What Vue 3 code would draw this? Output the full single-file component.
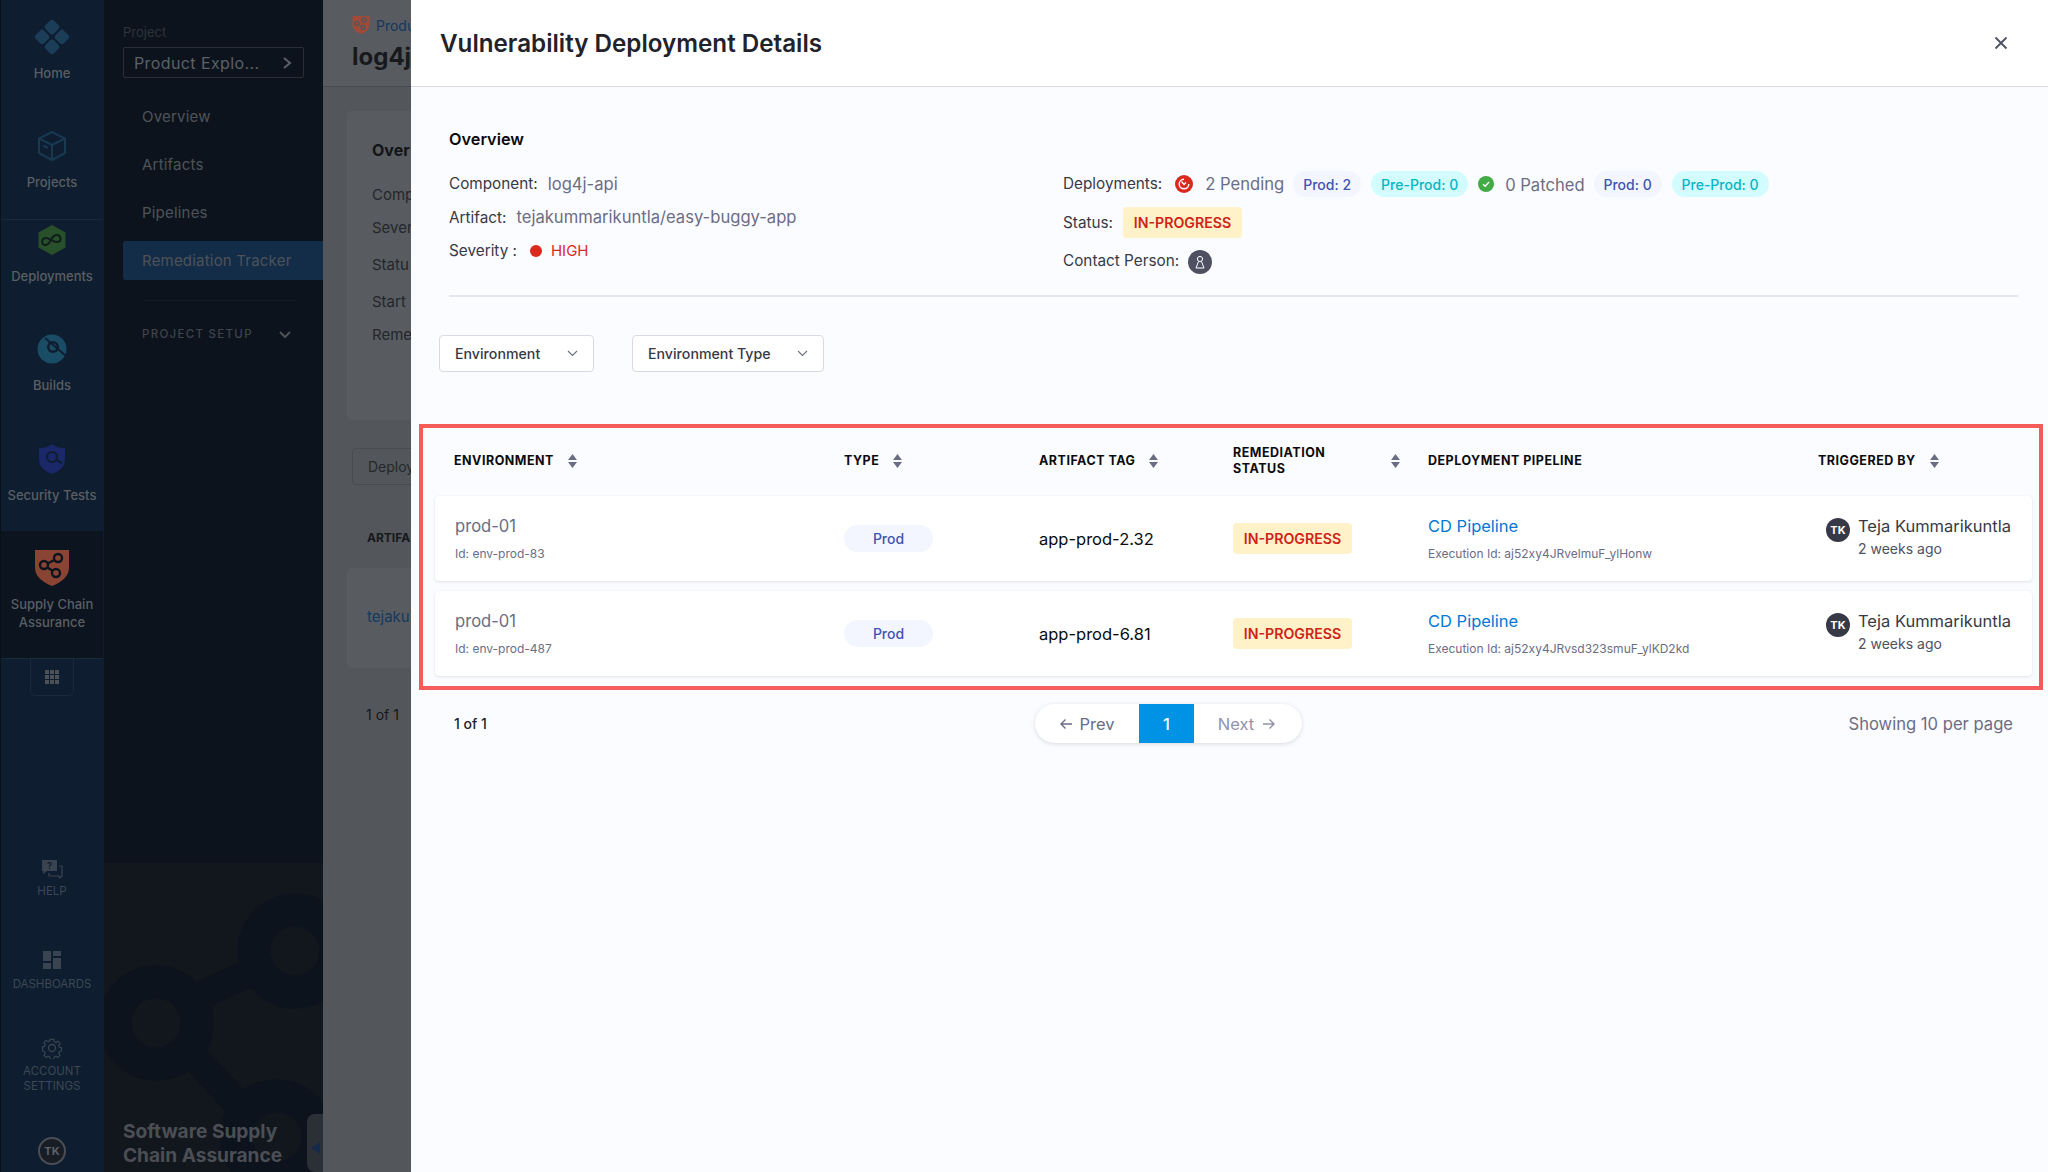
<script setup>
const railItems = [
  { label: ["Home"], icon: "home", cls: "r-home" },
  { label: ["Projects"], icon: "projects", cls: "r-projects" },
  { label: ["Deployments"], icon: "deploy", cls: "r-deploy" },
  { label: ["Builds"], icon: "builds", cls: "r-builds" },
  { label: ["Security Tests"], icon: "security", cls: "r-security" },
  { label: ["Supply Chain", "Assurance"], icon: "scs", cls: "r-scs" }
];

const navLinks = ["Overview", "Artifacts", "Pipelines", "Remediation Tracker"];

const columns = [
  { title: "ENVIRONMENT", sort: true },
  { title: "TYPE", sort: true },
  { title: "ARTIFACT TAG", sort: true },
  { title: "REMEDIATION STATUS", sort: true, wide: true },
  { title: "DEPLOYMENT PIPELINE", sort: false },
  { title: "TRIGGERED BY", sort: true }
];

const rows = [
  { env: "prod-01", id: "env-prod-83", tag: "app-prod-2.32", exec: "aj52xy4JRvelmuF_ylHonw" },
  { env: "prod-01", id: "env-prod-487", tag: "app-prod-6.81", exec: "aj52xy4JRvsd323smuF_ylKD2kd" }
];
</script>

<template>
  <div class="page">
    <aside class="rail">
      <div v-for="item in railItems" :key="item.icon" class="rail-item" :class="item.cls">
        <div class="rail-icon">
          <svg v-if="item.icon == 'home'" width="36" height="36" viewBox="0 0 36 36">
            <g fill="#1b3d58" transform="rotate(45 18 18)">
              <rect x="5" y="5" width="12" height="12" rx="3" />
              <rect x="19" y="5" width="12" height="12" rx="3" />
              <rect x="5" y="19" width="12" height="12" rx="3" />
              <rect x="19" y="19" width="12" height="12" rx="3" />
            </g>
          </svg>
          <svg v-if="item.icon == 'projects'" width="30" height="32" viewBox="0 0 30 32" fill="none" stroke="#18394f" stroke-width="2" stroke-linejoin="round">
            <path d="M15 2 28 8.500V23L15 30 2 23V8.500Z" />
            <path d="M2 8.500 15 15 28 8.500M15 15V30" />
            <path d="M6 15.500 11 18" />
          </svg>
          <svg v-if="item.icon == 'deploy'" width="30" height="32" viewBox="0 0 30 32">
            <path d="M15 1 28.500 8.500V23.500L15 31 1.500 23.500V8.500Z" fill="#28502b" />
            <path d="M8 21c-4 0-4-7 1-7 4 0 7 5 12 4 4-1 3-7-1-7-4 0-5 3-6 5-1 2-3 5-6 5Z" fill="none" stroke="#0f1f1a" stroke-width="2" />
          </svg>
          <svg v-if="item.icon == 'builds'" width="30" height="30" viewBox="0 0 30 30">
            <circle cx="15" cy="15" r="14.500" fill="#1a4c66" />
            <circle cx="16" cy="13" r="6" fill="#0e1d2f" />
            <circle cx="16" cy="13" r="3.500" fill="#1a4c66" />
            <path d="M8 4 29 22" stroke="#0e1d2f" stroke-width="1.800" />
          </svg>
          <svg v-if="item.icon == 'security'" width="28" height="32" viewBox="0 0 28 32">
            <path d="M14 1C18 4 23 5 27 5V16C27 24 20 29 14 31 8 29 1 24 1 16V5C5 5 10 4 14 1Z" fill="#1a2768" />
            <circle cx="14" cy="14" r="5" fill="none" stroke="#0e1d2f" stroke-width="2" />
            <path d="M18 17 24 20" stroke="#0e1d2f" stroke-width="2" />
          </svg>
          <svg v-if="item.icon == 'scs'" width="34" height="36" viewBox="0 0 34 36">
            <path d="M0 0H34V18C34 27 25 33 17 36 9 33 0 27 0 18Z" fill="#8a4433" />
            <g fill="none" stroke="#0b141f" stroke-width="2.400">
              <circle cx="23" cy="8" r="4" />
              <circle cx="9" cy="15" r="4" />
              <circle cx="21" cy="23" r="4" />
              <path d="M19.500 10 12.500 13.500M12.500 17.500 17.800 21" />
            </g>
          </svg>
        </div>
        <div class="rail-label">
          <div v-for="line in item.label" :key="line">{{ line }}</div>
        </div>
      </div>
      <div class="rail-grid">
        <div class="grid-btn">
          <svg width="14" height="14" viewBox="0 0 14 14" fill="#4b5157">
            <template v-for="r in 3" :key="r">
              <rect v-for="c in 3" :key="c" :x="(c - 1) * 5" :y="(r - 1) * 5" width="4" height="4" />
            </template>
          </svg>
        </div>
      </div>

      <div class="util util-help">
        <svg width="22" height="20" viewBox="0 0 22 20">
          <path d="M1 1H16V12H6L2 15V12H1Z" fill="#3a4450" />
          <path d="M18 7H21V17L19 19 18 17H8V14" fill="none" stroke="#3a4450" stroke-width="1.200" />
          <text x="8.500" y="10" text-anchor="middle" class="help-q">?</text>
        </svg>
        <div class="util-label">HELP</div>
      </div>
      <div class="util util-dash">
        <svg width="20" height="20" viewBox="0 0 20 20" fill="#3a4450">
          <rect x="1" y="1" width="8" height="10" />
          <rect x="11" y="1" width="8" height="5" />
          <rect x="1" y="13" width="8" height="6" />
          <rect x="11" y="8" width="8" height="11" />
        </svg>
        <div class="util-label">DASHBOARDS</div>
      </div>
      <div class="util util-set">
        <svg width="22" height="22" viewBox="0 0 22 22" fill="none" stroke="#3a4450" stroke-width="1.300">
          <path d="M9 1.500h4l.5 2.600 1.900.8 2.200-1.500 2.400 2.700-1.500 2.100.8 2 2.200.5v3.600l-2.200.5-.8 2 1.500 2.100-2.400 2.700-2.200-1.500-1.900.8-.5 2.600H9l-.5-2.600-1.900-.8-2.200 1.500-2.400-2.700 1.500-2.100-.8-2-2.200-.5V9.700l2.200-.5.8-2-1.500-2.100 2.400-2.700 2.200 1.500 1.900-.8Z" transform="translate(1.100 1.100) scale(.9)" />
          <circle cx="11" cy="11" r="3.500" />
        </svg>
        <div class="util-label">ACCOUNT</div>
        <div class="util-label">SETTINGS</div>
      </div>
      <div class="rail-user">TK</div>
    </aside>

    <nav class="side">
      <div class="project-label">Project</div>
      <div class="project-select">
        <span>Product Explo...</span>
        <svg width="10" height="14" viewBox="0 0 10 14" fill="none" stroke="#5b6066" stroke-width="2"><path d="M2 2 8 7 2 12" /></svg>
      </div>
      <div class="links">
        <div v-for="link in navLinks" :key="link" class="link" :class="{ active: link == 'Remediation Tracker' }">{{ link }}</div>
      </div>
      <div class="side-divider"></div>
      <div class="setup">
        <span>PROJECT SETUP</span>
        <svg width="14" height="9" viewBox="0 0 14 9" fill="none" stroke="#4b5157" stroke-width="2"><path d="M2 2 7 7 12 2" /></svg>
      </div>
      <div class="promo">
        <svg class="promo-art" width="219" height="309" viewBox="0 0 219 309">
          <g fill="none" stroke="#0c131d" stroke-width="33">
            <circle cx="191" cy="88" r="41" />
            <circle cx="52" cy="160" r="41" />
            <circle cx="173" cy="274" r="41" />
          </g>
          <path d="M85 138 160 103M85 188 140 248" stroke="#0c131d" stroke-width="28" />
        </svg>
        <div class="promo-title">Software Supply<br />Chain Assurance</div>
        <div class="promo-toggle">
          <svg width="9" height="12" viewBox="0 0 9 12"><path d="M9 0V12L0 6Z" fill="#15294b" /></svg>
        </div>
      </div>
    </nav>

    <main class="behind">
      <div class="behind-head">
        <div class="crumb">
          <svg width="18" height="18" viewBox="0 0 34 36">
            <path d="M0 0H34V18C34 27 25 33 17 36 9 33 0 27 0 18Z" fill="#a04a38" />
            <g fill="none" stroke="#53575b" stroke-width="3">
              <circle cx="23" cy="8" r="4" />
              <circle cx="9" cy="15" r="4" />
              <circle cx="21" cy="23" r="4" />
            </g>
          </svg>
          <span>Produ</span>
        </div>
        <div class="behind-title">log4j</div>
      </div>
      <div class="behind-card">
        <div class="bc-title">Over</div>
        <div class="bc-line l1">Comp</div>
        <div class="bc-line l2">Sever</div>
        <div class="bc-line l3">Statu</div>
        <div class="bc-line l4">Start</div>
        <div class="bc-line l5">Reme</div>
      </div>
      <div class="behind-select">Deploy</div>
      <div class="behind-th">ARTIFA</div>
      <div class="behind-row">tejaku</div>
      <div class="behind-count">1 of 1</div>
    </main>

    <section class="drawer">
      <header class="drawer-head">
        <h1>Vulnerability Deployment Details</h1>
        <svg class="close" width="16" height="16" viewBox="0 0 16 16" fill="none" stroke="#4f5162" stroke-width="1.800"><path d="M2.500 2.500 13.500 13.500M13.500 2.500 2.500 13.500" /></svg>
      </header>

      <div class="overview">
        <h2>Overview</h2>
        <div class="ov-cols">
          <div class="ov-left">
            <div class="ov-row"><span class="key">Component:</span><span class="val v-comp">log4j-api</span></div>
            <div class="ov-row"><span class="key">Artifact:</span><span class="val v-art">tejakummarikuntla/easy-buggy-app</span></div>
            <div class="ov-row">
              <span class="key">Severity :</span>
              <span class="dot"></span>
              <span class="high">HIGH</span>
            </div>
          </div>
          <div class="ov-right">
            <div class="ov-line">
              <span class="key">Deployments:</span>
              <svg class="pend-icon" width="18" height="18" viewBox="0 0 18 18">
                <circle cx="9" cy="9" r="9" fill="#da291d" />
                <circle cx="9" cy="9" r="4.800" fill="none" stroke="#fff" stroke-width="1.400" stroke-dasharray="22 8" />
                <path d="M6.500 6.500 9 9.500 11 7.500" fill="none" stroke="#fff" stroke-width="1.400" />
              </svg>
              <span class="val count">2 Pending</span>
              <span class="pill prod">Prod: 2</span>
              <span class="pill pre">Pre-Prod: 0</span>
              <svg class="ok-icon" width="16" height="16" viewBox="0 0 16 16">
                <circle cx="8" cy="8" r="8" fill="#42ab45" />
                <path d="M5 8.200 7.200 10.300 11 6" fill="none" stroke="#fff" stroke-width="1.300" />
              </svg>
              <span class="val count patched">0 Patched</span>
              <span class="pill prod">Prod: 0</span>
              <span class="pill pre">Pre-Prod: 0</span>
            </div>
            <div class="ov-line">
              <span class="key">Status:</span>
              <span class="status status-top">IN-PROGRESS</span>
            </div>
            <div class="ov-line">
              <span class="key contact-key">Contact Person:</span>
              <span class="contact">
                <svg width="12" height="14" viewBox="0 0 12 14" fill="none" stroke="#fff" stroke-width="1"><circle cx="6" cy="4" r="2.600" /><path d="M4.500 6.500 2 13H10L7.500 6.500" /></svg>
              </span>
            </div>
          </div>
        </div>
      </div>

      <div class="filters">
        <div class="filter f-env">
          <span>Environment</span>
          <svg width="11" height="7" viewBox="0 0 11 7" fill="none" stroke="#6b6d85" stroke-width="1.100"><path d="M1 1 5.500 5.500 10 1" /></svg>
        </div>
        <div class="filter f-type">
          <span>Environment Type</span>
          <svg width="11" height="7" viewBox="0 0 11 7" fill="none" stroke="#6b6d85" stroke-width="1.100"><path d="M1 1 5.500 5.500 10 1" /></svg>
        </div>
      </div>

      <div class="table-box">
        <div class="thead">
          <div v-for="col in columns" :key="col.title" class="th" :class="{ 'th-wide': col.wide }">
            <span class="th-text">{{ col.title }}</span>
            <svg v-if="col.sort" class="sort" width="9" height="14" viewBox="0 0 9 14" fill="#6b6d85"><path d="M4.500 0 9 6H0ZM0 8H9L4.500 14Z" /></svg>
          </div>
        </div>
        <div v-for="row in rows" :key="row.id" class="card">
          <div class="env-cell">
            <div class="env-name">{{ row.env }}</div>
            <div class="sub">Id: {{ row.id }}</div>
          </div>
          <div><span class="type-pill">Prod</span></div>
          <div class="tag">{{ row.tag }}</div>
          <div><span class="status">IN-PROGRESS</span></div>
          <div>
            <div class="pipeline">CD Pipeline</div>
            <div class="sub">Execution Id: {{ row.exec }}</div>
          </div>
          <div class="trigger">
            <span class="avatar">TK</span>
            <div>
              <div class="person">Teja Kummarikuntla</div>
              <div class="when">2 weeks ago</div>
            </div>
          </div>
        </div>
      </div>

      <div class="pager-row">
        <div class="page-count">1 of 1</div>
        <div class="pager">
          <span class="pg prev">
            <svg width="14" height="12" viewBox="0 0 14 12" fill="none" stroke="currentColor" stroke-width="1.400"><path d="M13 6H2M6.500 1.500 2 6 6.500 10.500" /></svg>
            Prev
          </span>
          <span class="pg current">1</span>
          <span class="pg next">
            Next
            <svg width="14" height="12" viewBox="0 0 14 12" fill="none" stroke="currentColor" stroke-width="1.400"><path d="M1 6H12M7.500 1.500 12 6 7.500 10.500" /></svg>
          </span>
        </div>
        <div class="per-page">Showing 10 per page</div>
      </div>
    </section>
  </div>
</template>

<style>
body {
  margin: 0;
  background: #fbfcff;
}
</style>

<style scoped>
.page {
  position: relative;
  display: flex;
  width: 2048px;
  height: 1172px;
  overflow: hidden;
  font-family: Inter, "Noto Sans", sans-serif;
}

/* rail */
.rail {
  display: flex;
  flex-direction: column;
  width: 102px;
  padding-right: 1px;
  height: 100%;
  border-left: 1px solid #0b111a;
  background: #0e1d2f;
  color: #5a5f64;
}
.rail-item {
  display: flex;
  flex-direction: column;
  align-items: center;
  box-sizing: border-box;
}
.rail-icon {
  display: flex;
  align-items: center;
  justify-content: center;
  height: 40px;
  margin-bottom: 9px;
}
.rail-label {
  font-size: 13px;
  font-weight: 500;
  line-height: 14px;
  text-align: center;
  white-space: nowrap;
}
.r-home { height: 110px; padding-top: 17px; }
.r-projects { height: 110px; padding-top: 16px; border-bottom: 1px solid #1b2a3b; }
.r-deploy { height: 94px; }
.r-builds { height: 110px; padding-top: 15px; }
.r-security { height: 107px; padding-top: 15px; }
.r-scs { height: 127px; padding-top: 17px; background: #0b141f; }
.r-scs .rail-label { line-height: 18px; margin-top: -2px; }
.rail-grid {
  display: flex;
  justify-content: center;
  height: 37px;
  border-top: 1px solid #1b2a3b;
}
.grid-btn {
  display: flex;
  align-items: center;
  justify-content: center;
  width: 44px;
  border: 1px solid #1b2a3b;
  border-top: none;
  border-radius: 0 0 5px 5px;
  box-sizing: border-box;
}
.util {
  display: flex;
  flex-direction: column;
  align-items: center;
  box-sizing: border-box;
}
.util svg {
  margin-bottom: 5px;
}
.util-label {
  font-size: 11.500px;
  line-height: 15px;
  color: #3d4853;
}
.help-q {
  font-size: 9px;
  font-weight: 700;
  fill: #0e1d2f;
}
.util-help { margin-top: 163px; height: 91px; }
.util-dash { height: 87px; }
.util-dash svg { margin-bottom: 7px; }
.util-set { height: 100px; }
.rail-user {
  display: flex;
  align-items: center;
  justify-content: center;
  align-self: center;
  width: 28px;
  height: 28px;
  box-sizing: border-box;
  border: 2px solid #4a4e55;
  border-radius: 50%;
  background: #171c25;
  color: #5c6268;
  font-size: 11px;
  font-weight: 700;
}

/* project nav */
.side {
  display: flex;
  flex-direction: column;
  width: 219px;
  height: 100%;
  background: #0c131d;
  color: #4e5359;
}
.project-label {
  margin: 24px 0 0 19px;
  font-size: 13px;
  line-height: 16px;
  color: #2e333a;
}
.project-select {
  display: flex;
  align-items: center;
  justify-content: space-between;
  box-sizing: border-box;
  width: 181px;
  height: 31px;
  margin: 7px 0 0 19px;
  padding: 0 11px 0 10px;
  border: 1px solid #2a2f36;
  border-radius: 2px;
  font-size: 16px;
  letter-spacing: 0.4px;
  color: #5b6066;
}
.links {
  display: flex;
  flex-direction: column;
  margin: 19px 0 0 19px;
}
.link {
  display: flex;
  align-items: center;
  height: 39px;
  margin-bottom: 9px;
  padding-left: 19px;
  font-size: 15px;
  letter-spacing: 0.2px;
}
.link.active {
  margin-bottom: 0;
  background: #132c47;
  border-radius: 2px 0 0 2px;
}
.side-divider {
  width: 152px;
  height: 1px;
  margin: 20px 0 0 39px;
  background: #141b25;
}
.setup {
  display: flex;
  align-items: center;
  justify-content: space-between;
  width: 150px;
  height: 16px;
  margin: 25px 0 0 38px;
  font-size: 11.500px;
  font-weight: 500;
  letter-spacing: 1.300px;
  color: #3f444b;
}
.promo {
  position: relative;
  display: flex;
  flex-direction: column;
  justify-content: flex-end;
  box-sizing: border-box;
  flex: 1;
  margin-top: 521px;
  padding: 0 0 5px 19px;
  background: #12171d;
  overflow: hidden;
}
.promo-art {
  position: absolute;
  top: 0;
  left: 0;
}
.promo-title {
  position: relative;
  font-size: 19.100px;
  font-weight: 700;
  line-height: 24px;
  color: #4b4f55;
}
.promo-toggle {
  position: absolute;
  right: 0;
  bottom: 0;
  display: flex;
  align-items: center;
  justify-content: center;
  box-sizing: border-box;
  width: 16px;
  height: 58px;
  padding-top: 10px;
  background: #2b3037;
  border-radius: 8px 0 0 8px;
}

/* page under the drawer */
.behind {
  flex: 1;
  background: #53575b;
  color: #1d1f24;
  overflow: hidden;
  white-space: nowrap;
}
.behind-head {
  box-sizing: border-box;
  height: 87px;
  padding: 16px 0 0 29px;
  border-bottom: 1px solid #484c50;
  background: #585c60;
}
.crumb {
  display: flex;
  align-items: center;
  gap: 6px;
  height: 18px;
  font-size: 14px;
  color: #16365f;
}
.behind-title {
  margin-top: 8px;
  font-size: 24px;
  font-weight: 700;
  line-height: 30px;
  color: #17191d;
}
.behind-card {
  position: relative;
  box-sizing: border-box;
  height: 309px;
  width: 200px;
  margin: 24px 0 0 24px;
  padding: 29px 0 0 25px;
  background: #585c60;
  border-radius: 4px;
}
.bc-title {
  font-size: 16px;
  font-weight: 700;
  line-height: 20px;
  color: #121417;
}
.bc-line {
  font-size: 15px;
  line-height: 20px;
  color: #24262a;
}
.l1 { margin-top: 25px; }
.l2 { margin-top: 13px; }
.l3 { margin-top: 17px; }
.l4 { margin-top: 17px; }
.l5 { margin-top: 13px; }
.behind-select {
  box-sizing: border-box;
  width: 200px;
  height: 37px;
  margin: 28px 0 0 29px;
  padding: 9px 0 0 15px;
  border: 1px solid #484c50;
  border-radius: 4px;
  font-size: 14px;
  line-height: 18px;
  color: #25272b;
}
.behind-th {
  margin: 45px 0 0 44px;
  font-size: 12px;
  font-weight: 700;
  line-height: 15px;
  color: #17191d;
}
.behind-row {
  box-sizing: border-box;
  width: 200px;
  height: 100px;
  margin: 23px 0 0 24px;
  padding: 39px 0 0 20px;
  background: #585c60;
  border-radius: 4px;
  font-size: 15px;
  line-height: 20px;
  color: #13395f;
}
.behind-count {
  margin: 37px 0 0 43px;
  font-size: 14px;
  line-height: 20px;
  color: #16181c;
}

/* drawer */
.drawer {
  position: absolute;
  top: 0;
  left: 411px;
  width: 1637px;
  height: 100%;
  background: #fbfcff;
  color: #383946;
}
.drawer-head {
  display: flex;
  align-items: center;
  justify-content: space-between;
  box-sizing: border-box;
  height: 87px;
  padding: 0 39px 0 29px;
  background: #fff;
  border-bottom: 1px solid #d9dae5;
}
h1 {
  margin: 0;
  font-size: 24.200px;
  font-weight: 600;
  color: #22222a;
}
.overview {
  box-sizing: border-box;
  height: 210px;
  margin: 0 30px 0 38px;
  padding-top: 41px;
  border-bottom: 2px solid #e4e5ee;
}
h2 {
  margin: 0;
  font-size: 16.300px;
  font-weight: 600;
  line-height: 22px;
  color: #0b0b0d;
}
.ov-cols {
  display: flex;
  margin-top: 17px;
}
.ov-left {
  width: 614px;
}
.ov-row {
  display: flex;
  align-items: center;
  height: 33.500px;
  font-size: 15.300px;
  white-space: nowrap;
}
.key {
  color: #383946;
}
.val {
  color: #6b6d85;
  font-size: 16.600px;
}
.v-comp { margin-left: 10px; }
.v-art { margin-left: 10px; }
.dot {
  width: 12px;
  height: 12px;
  margin-left: 13px;
  border-radius: 50%;
  background: #da291d;
}
.high {
  margin-left: 9px;
  color: #da291d;
  font-size: 15px;
}
.ov-right {
  margin-top: -3px;
}
.ov-line {
  display: flex;
  align-items: center;
  height: 39px;
  font-size: 15.300px;
  white-space: nowrap;
}
.pend-icon { margin-left: 13px; }
.count { margin: 0 9px 0 12px; }
.patched { margin-top: 2px; margin-left: 11px; }
.pill {
  display: inline-flex;
  align-items: center;
  justify-content: center;
  height: 26px;
  margin-top: 1px;
  border-radius: 13px;
  font-size: 14px;
  font-weight: 500;
}
.prod {
  width: 68px;
  background: #f3f6ff;
  color: #4153b0;
}
.pre {
  width: 97px;
  margin-left: 10px;
  background: #d3fcfe;
  color: #07b4c4;
}
.ok-icon { margin-left: 10px; margin-top: 1px; }
.status {
  display: inline-flex;
  align-items: center;
  justify-content: center;
  box-sizing: border-box;
  width: 119px;
  height: 31px;
  border-radius: 4px;
  background: #fff2c8;
  color: #cf2318;
  font-size: 14.200px;
  font-weight: 600;
}
.status-top { margin-left: 10px; }
.contact-key { margin-top: -2px; }
.contact {
  display: inline-flex;
  align-items: center;
  justify-content: center;
  width: 24px;
  height: 24px;
  margin-left: 9px;
  border-radius: 50%;
  background: #4f5162;
}
.filters {
  display: flex;
  gap: 38px;
  margin: 38px 0 0 28px;
}
.filter {
  display: flex;
  align-items: center;
  justify-content: space-between;
  box-sizing: border-box;
  height: 37px;
  padding: 0 15px;
  border: 1px solid #d9dae5;
  border-radius: 4px;
  background: #fff;
  font-size: 14.200px;
  font-weight: 500;
  color: #383946;
}
.f-env { width: 155px; }
.f-type { width: 192px; }

.table-box {
  box-sizing: border-box;
  width: 1624px;
  height: 266px;
  margin: 52px 0 0 8px;
  border: 4px solid #f55b5b;
}
.thead,
.card {
  display: grid;
  grid-template-columns: 390px 195px 194px 195px 390px 1fr;
  align-items: center;
}
.thead {
  box-sizing: border-box;
  height: 68px;
  padding: 0 0 2px 31px;
}
.th {
  display: flex;
  align-items: center;
  gap: 14px;
  font-size: 12.500px;
  font-weight: 700;
  line-height: 16px;
  color: #0b0b0d;
}
.th-text {
  letter-spacing: 0.5px;
}
.th-wide .th-text {
  width: 100px;
  margin-right: 44px;
}
.card {
  box-sizing: border-box;
  height: 85px;
  margin: 0 7px 10px 12px;
  padding-left: 19px;
  border-radius: 4px;
  background: #fff;
  box-shadow: 0 0 1px rgba(40, 41, 61, 0.08), 0 1px 3px rgba(96, 97, 112, 0.16);
}
.env-cell {
  padding-left: 1px;
}
.env-name {
  font-size: 16.600px;
  line-height: 22px;
  color: #6b6d85;
}
.sub {
  margin-top: 9px;
  font-size: 12px;
  line-height: 16px;
  color: #6b6d85;
}
.type-pill {
  display: inline-flex;
  align-items: center;
  justify-content: center;
  width: 89px;
  height: 27px;
  border-radius: 14px;
  background: #f3f6ff;
  color: #4153b0;
  font-size: 14px;
  font-weight: 500;
}
.tag {
  font-size: 16.500px;
  color: #0b0b0d;
}
.pipeline {
  font-size: 16.500px;
  line-height: 22px;
  color: #0278d5;
}
.trigger {
  display: flex;
  gap: 8px;
  padding-left: 8px;
}
.avatar {
  display: flex;
  align-items: center;
  justify-content: center;
  flex: none;
  width: 24px;
  height: 24px;
  margin-top: 2px;
  border-radius: 50%;
  background: #383946;
  color: #fff;
  font-size: 11px;
  font-weight: 700;
}
.person {
  font-size: 16.500px;
  line-height: 20px;
  color: #383946;
  white-space: nowrap;
}
.when {
  font-size: 14px;
  line-height: 25px;
  color: #4f5162;
}
.pager-row {
  display: grid;
  grid-template-columns: 581px auto 1fr;
  align-items: center;
  margin-top: 14px;
  padding: 0 35px 0 43px;
}
.page-count {
  font-size: 14px;
  font-weight: 500;
  color: #22222a;
}
.pager {
  display: flex;
  width: 267px;
  height: 39px;
  border-radius: 20px;
  background: #fff;
  box-shadow: 0 1px 4px rgba(96, 97, 112, 0.22);
  overflow: hidden;
  font-size: 16.500px;
}
.pg {
  display: flex;
  align-items: center;
  justify-content: center;
  gap: 6px;
  white-space: nowrap;
}
.prev { width: 104px; color: #6b6d85; }
.current { width: 55px; background: #0092e4; color: #fff; font-weight: 500; }
.next { width: 108px; gap: 8px; padding-right: 2px; box-sizing: border-box; color: #9293ab; }
.per-page {
  font-size: 16.600px;
  color: #6b6d85;
  text-align: right;
}
</style>
